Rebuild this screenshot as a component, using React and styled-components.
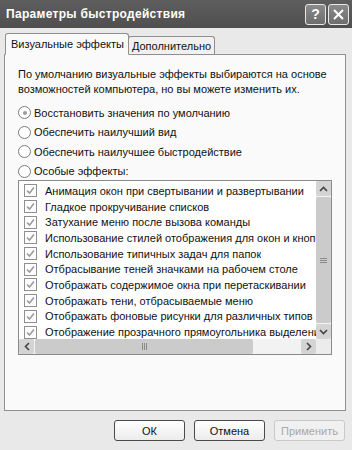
import React from "react"
import styled, { createGlobalStyle } from "styled-components"

const GlobalStyle = createGlobalStyle`
	html, body {
		margin: 0;
		padding: 0;
		background: #e9e9e9;
	}
	body {
		font-family: "Liberation Sans", Arial, sans-serif;
		font-size: 11px;
		color: #111;
	}
`

const radios = [
	{ label: "Восстановить значения по умолчанию", checked: true },
	{ label: "Обеспечить наилучший вид" },
	{ label: "Обеспечить наилучшее быстродействие" },
	{ label: "Особые эффекты:" },
]

const effects = [
	"Анимация окон при свертывании и развертывании",
	"Гладкое прокручивание списков",
	"Затухание меню после вызова команды",
	"Использование стилей отображения для окон и кнопок",
	"Использование типичных задач для папок",
	"Отбрасывание теней значками на рабочем столе",
	"Отображать содержимое окна при перетаскивании",
	"Отображать тени, отбрасываемые меню",
	"Отображать фоновые рисунки для различных типов папок",
	"Отображение прозрачного прямоугольника выделения",
]

const Grip = ({ vertical }) =>
	vertical ? (
		<svg width="7" height="7" viewBox="0 0 7 7">
			<path d="M0 1.5 H7 M0 3.5 H7 M0 5.5 H7" stroke="#8a8a8a" strokeWidth="1" />
		</svg>
	) : (
		<svg width="7" height="7" viewBox="0 0 7 7">
			<path d="M1.5 0 V7 M3.5 0 V7 M5.5 0 V7" stroke="#8a8a8a" strokeWidth="1" />
		</svg>
	)

const App = () => {
	return (
		<Window>
			<GlobalStyle />
			<TitleBar>
				<Title>Параметры быстродействия</Title>
				<TitleButtons>
					<TitleButton>?</TitleButton>
					<TitleButton>
						<svg width="13" height="13" viewBox="0 0 13 13">
							<path d="M2 2 L11 11 M11 2 L2 11" stroke="#fff" strokeWidth="2" />
						</svg>
					</TitleButton>
				</TitleButtons>
			</TitleBar>
			<Body>
				<Tabs>
					<Tab active>Визуальные эффекты</Tab>
					<Tab>Дополнительно</Tab>
				</Tabs>
				<Panel>
					<Intro>
						По умолчанию визуальные эффекты выбираются на основе
						возможностей компьютера, но вы можете изменить их.
					</Intro>
					<RadioList>
						{radios.map((r) => (
							<RadioRow key={r.label}>
								<Radio checked={r.checked} />
								<span>{r.label}</span>
							</RadioRow>
						))}
					</RadioList>
					<ListBox>
						<ListInner>
							<Items>
								{effects.map((e) => (
									<Item key={e}>
										<Check>
											<svg width="9" height="9" viewBox="0 0 9 9">
												<path d="M1 4.5 L3.5 7 L8 1.5" stroke="#9a9a9a" strokeWidth="1.6" fill="none" />
											</svg>
										</Check>
										<ItemText>{e}</ItemText>
									</Item>
								))}
							</Items>
							<VScroll>
								<ScrollBtn>
									<svg width="9" height="6" viewBox="0 0 9 6">
										<path d="M1 5 L4.5 1.5 L8 5" stroke="#444" strokeWidth="1.6" fill="none" />
									</svg>
								</ScrollBtn>
								<VTrack>
									<VThumb>
										<Grip vertical />
									</VThumb>
								</VTrack>
								<ScrollBtn>
									<svg width="9" height="6" viewBox="0 0 9 6">
										<path d="M1 1 L4.5 4.5 L8 1" stroke="#444" strokeWidth="1.6" fill="none" />
									</svg>
								</ScrollBtn>
							</VScroll>
						</ListInner>
						<HScroll>
							<ScrollBtn>
								<svg width="6" height="9" viewBox="0 0 6 9">
									<path d="M5 1 L1.5 4.5 L5 8" stroke="#444" strokeWidth="1.6" fill="none" />
								</svg>
							</ScrollBtn>
							<HTrack>
								<HThumb>
									<Grip />
								</HThumb>
							</HTrack>
							<ScrollBtn>
								<svg width="6" height="9" viewBox="0 0 6 9">
									<path d="M1 1 L4.5 4.5 L1 8" stroke="#444" strokeWidth="1.6" fill="none" />
								</svg>
							</ScrollBtn>
							<Corner />
						</HScroll>
					</ListBox>
				</Panel>
				<Buttons>
					<Button>ОК</Button>
					<Button>Отмена</Button>
					<Button disabled>Применить</Button>
				</Buttons>
			</Body>
		</Window>
	)
}

const Window = styled.div`
	width: 352px;
	height: 450px;
	background: #e9e9e9;
	display: flex;
	flex-direction: column;
	overflow: hidden;
`

const TitleBar = styled.div`
	height: 28px;
	background: linear-gradient(#5e5e5e, #4f4f4f);
	display: flex;
	align-items: center;
	justify-content: space-between;
	padding: 0 3px 0 6px;
`

const Title = styled.div`
	color: #fff;
	font-weight: bold;
	font-size: 12px;
	letter-spacing: 0.3px;
`

const TitleButtons = styled.div`
	display: flex;
	gap: 2px;
`

const TitleButton = styled.div`
	width: 19px;
	height: 19px;
	border: 1px solid #e8e8e8;
	border-radius: 3px;
	background: linear-gradient(#8a8a8a, #6d6d6d);
	color: #fff;
	font-weight: bold;
	font-size: 14px;
	display: flex;
	align-items: center;
	justify-content: center;
`

const Body = styled.div`
	flex: 1;
	padding: 4px 6px 0 4px;
	display: flex;
	flex-direction: column;
`

const Tabs = styled.div`
	display: flex;
	align-items: flex-end;
	padding-left: 1px;
	height: 22px;
	position: relative;
	z-index: 1;
`

const Tab = styled.div`
	height: ${(p) => (p.active ? "22px" : "18px")};
	padding: ${(p) => (p.active ? "0 4px 0 5px" : "0 3px")};
	display: flex;
	align-items: center;
	background: ${(p) => (p.active ? "#fafafa" : "#f0f0f0")};
	border: 1px solid #8f8f8f;
	border-bottom: ${(p) => (p.active ? "1px solid #fafafa" : "none")};
	border-radius: 3px 3px 0 0;
	margin-bottom: ${(p) => (p.active ? "-1px" : "0")};
	margin-left: ${(p) => (p.active ? "0" : "-1px")};
	box-sizing: border-box;
`

const Panel = styled.div`
	height: 357px;
	background: #fafafa;
	border: 1px solid #8f8f8f;
	box-sizing: border-box;
	padding: 12px 13px 0 13px;
`

const Intro = styled.p`
	margin: 0;
	line-height: 15px;
`

const RadioList = styled.div`
	margin-top: 9px;
	display: flex;
	flex-direction: column;
	gap: 6px;
`

const RadioRow = styled.div`
	display: flex;
	align-items: center;
	gap: 3px;
	height: 13.5px;
`

const Radio = styled.span`
	width: 11px;
	height: 11px;
	border-radius: 50%;
	border: 1px solid #7a7a7a;
	background: #fff;
	position: relative;
	&::after {
		content: "";
		display: ${(p) => (p.checked ? "block" : "none")};
		position: absolute;
		left: 3.5px;
		top: 3.5px;
		width: 4px;
		height: 4px;
		border-radius: 50%;
		background: #9a9a9a;
	}
`

const ListBox = styled.div`
	margin-top: 2px;
	width: 314px;
	height: 175px;
	border: 1px solid #8a8a8a;
	box-sizing: border-box;
	background: #fff;
	display: flex;
	flex-direction: column;
`

const ListInner = styled.div`
	flex: 1;
	display: flex;
	min-height: 0;
`

const Items = styled.div`
	flex: 1;
	min-width: 0;
	overflow: hidden;
	padding: 2px 0 0 5px;
`

const Item = styled.div`
	display: flex;
	align-items: center;
	height: 15.7px;
	white-space: nowrap;
`

const Check = styled.span`
	width: 11px;
	height: 11px;
	flex: none;
	border: 1px solid #8f8f8f;
	background: #fff;
	display: flex;
	align-items: center;
	justify-content: center;
	margin-right: 8px;
`

const ItemText = styled.span`
	overflow: hidden;
	min-width: 0;
`

const VScroll = styled.div`
	width: 15px;
	flex: none;
	display: flex;
	flex-direction: column;
	background: #f2f2f2;
`

const ScrollBtn = styled.div`
	width: 15px;
	height: 15px;
	flex: none;
	display: flex;
	align-items: center;
	justify-content: center;
	background: #d4d4d4;
	border-radius: 2px;
`

const VTrack = styled.div`
	flex: 1;
	padding: 1px 0;
	display: flex;
	flex-direction: column;
`

const VThumb = styled.div`
	flex: 1;
	background: #cbcbcb;
	border-radius: 2px;
	display: flex;
	align-items: center;
	justify-content: center;
`

const HScroll = styled.div`
	height: 15px;
	display: flex;
	background: #f2f2f2;
`

const HTrack = styled.div`
	flex: 1;
	padding: 0 1px;
	display: flex;
`

const HThumb = styled.div`
	width: 218px;
	background: #cbcbcb;
	border-radius: 2px;
	display: flex;
	align-items: center;
	justify-content: center;
`

const Corner = styled.div`
	width: 15px;
	background: #ececec;
`

const Buttons = styled.div`
	display: flex;
	justify-content: flex-end;
	gap: 9px;
	margin-top: 9px;
	padding-right: 1px;
`

const Button = styled.div`
	width: 71px;
	height: 21px;
	box-sizing: border-box;
	border: 1px solid ${(p) => (p.disabled ? "#c8c8c8" : "#4a4a4a")};
	border-radius: 3px;
	background: ${(p) => (p.disabled ? "#f0f0f0" : "linear-gradient(#ffffff, #ececec)")};
	color: ${(p) => (p.disabled ? "#a8a8a8" : "#111")};
	display: flex;
	align-items: center;
	justify-content: center;
`

export default App
